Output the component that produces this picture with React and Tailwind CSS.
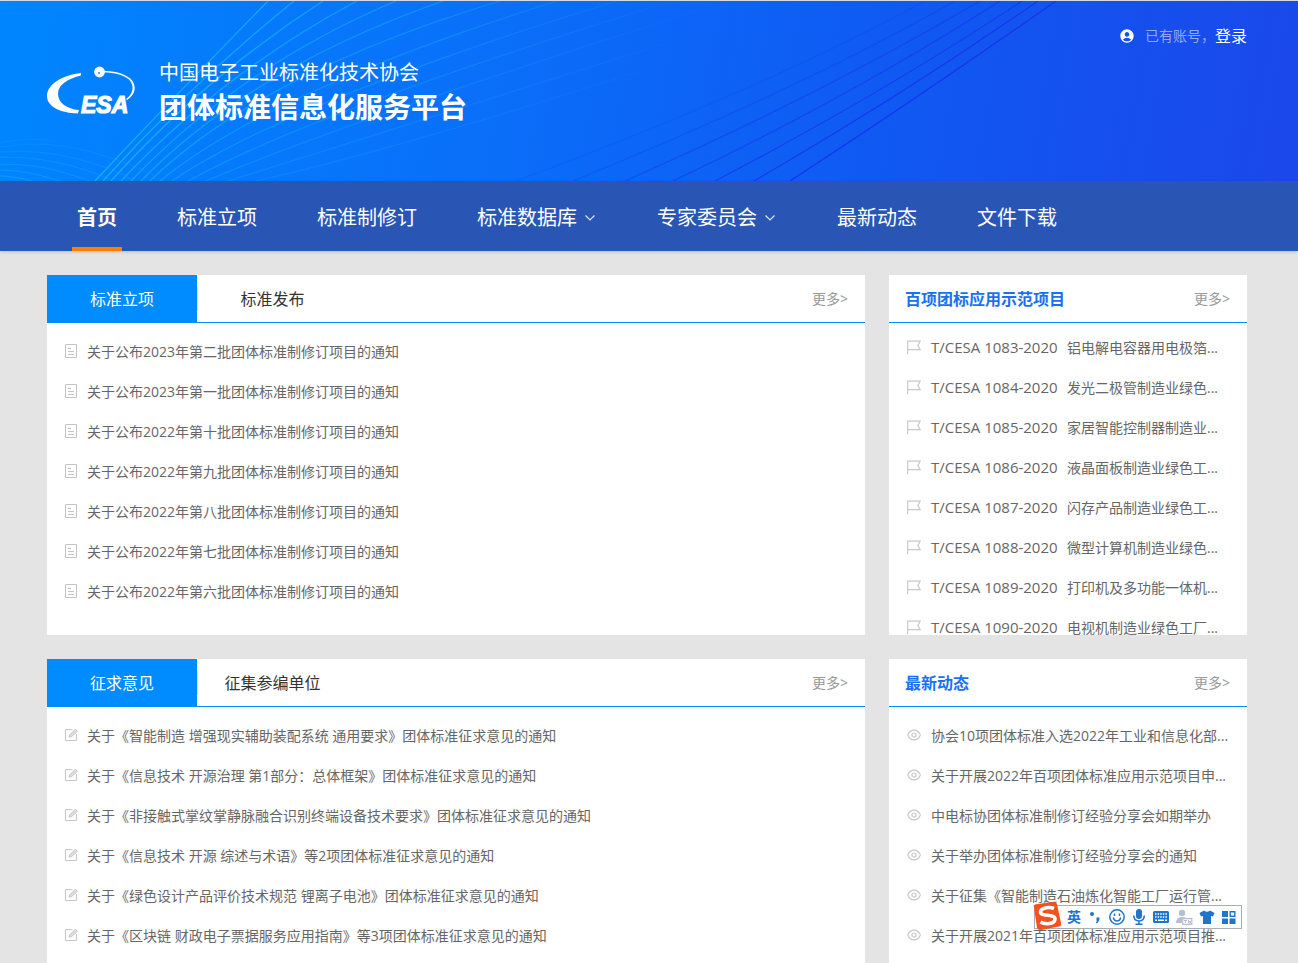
import React from "react";
import { MdAccountCircle } from "react-icons/md";

const NAV = [
  { label: "首页", active: true },
  { label: "标准立项" },
  { label: "标准制修订" },
  { label: "标准数据库", menu: true },
  { label: "专家委员会", menu: true },
  { label: "最新动态" },
  { label: "文件下载" },
];

const NOTICES = [
  "关于公布2023年第二批团体标准制修订项目的通知",
  "关于公布2023年第一批团体标准制修订项目的通知",
  "关于公布2022年第十批团体标准制修订项目的通知",
  "关于公布2022年第九批团体标准制修订项目的通知",
  "关于公布2022年第八批团体标准制修订项目的通知",
  "关于公布2022年第七批团体标准制修订项目的通知",
  "关于公布2022年第六批团体标准制修订项目的通知",
];

const PROJECTS = [
  ["T/CESA 1083-2020", "铝电解电容器用电极箔..."],
  ["T/CESA 1084-2020", "发光二极管制造业绿色..."],
  ["T/CESA 1085-2020", "家居智能控制器制造业..."],
  ["T/CESA 1086-2020", "液晶面板制造业绿色工..."],
  ["T/CESA 1087-2020", "闪存产品制造业绿色工..."],
  ["T/CESA 1088-2020", "微型计算机制造业绿色..."],
  ["T/CESA 1089-2020", "打印机及多功能一体机..."],
  ["T/CESA 1090-2020", "电视机制造业绿色工厂..."],
];

const COMMENTS = [
  "关于《智能制造 增强现实辅助装配系统 通用要求》团体标准征求意见的通知",
  "关于《信息技术 开源治理 第1部分：总体框架》团体标准征求意见的通知",
  "关于《非接触式掌纹掌静脉融合识别终端设备技术要求》团体标准征求意见的通知",
  "关于《信息技术 开源 综述与术语》等2项团体标准征求意见的通知",
  "关于《绿色设计产品评价技术规范 锂离子电池》团体标准征求意见的通知",
  "关于《区块链 财政电子票据服务应用指南》等3项团体标准征求意见的通知",
];

const NEWS = [
  "协会10项团体标准入选2022年工业和信息化部...",
  "关于开展2022年百项团体标准应用示范项目申...",
  "中电标协团体标准制修订经验分享会如期举办",
  "关于举办团体标准制修订经验分享会的通知",
  "关于征集《智能制造石油炼化智能工厂运行管...",
  "关于开展2021年百项团体标准应用示范项目推...",
];

const CYAN_WAVES = [
  "M95 180Q172 98 268 0",
  "M103 180Q190 84 294 0",
  "M111 180Q205 76 323 0",
  "M121 180Q225 70 357 0",
  "M131 180Q240 66 396 0",
  "M141 180Q250 68 443 0",
  "M150 180Q262 72 500 0",
  "M160 180Q270 90 557 0",
  "M172 180Q290 100 617 0",
  "M188 180Q310 112 672 0",
  "M206 180Q340 122 728 0",
  "M228 180Q370 136 800 0",
  "M256 180Q390 150 640 70",
];

const DARK_WAVES = [
  "M790 180Q925 92 1056 0",
  "M754 180Q900 96 1038 0",
  "M715 180Q880 94 1022 0",
  "M673 180Q850 96 1000 0",
  "M625 180Q820 94 980 0",
  "M573 180Q800 88 955 0",
  "M516 180Q760 90 925 0",
];

const LEFT_WAVES = [
  "M0 142Q26 136 54 140",
  "M0 146Q46 138 92 151T164 180",
  "M0 151Q40 148 78 158T134 180",
  "M0 156Q40 156 72 165T112 180",
  "M0 163Q36 163 62 171T90 180",
  "M0 169Q26 169 60 180",
  "M0 175Q14 175 32 180",
];

function HeaderWaves() {
  return (
    <svg
      className="absolute inset-0 h-full w-full"
      viewBox="0 0 1298 180"
      preserveAspectRatio="none"
      fill="none"
      aria-hidden="true"
    >
      <defs>
        <linearGradient id="cyan" gradientUnits="userSpaceOnUse" x1="90" y1="0" x2="740" y2="0">
          <stop offset="0" stopColor="#10c8f4" stopOpacity="0.8" />
          <stop offset="0.55" stopColor="#1ab0fa" stopOpacity="0.65" />
          <stop offset="1" stopColor="#2a90fa" stopOpacity="0" />
        </linearGradient>
      </defs>
      {CYAN_WAVES.map((d, i) => (
        <path key={d} d={d} stroke="url(#cyan)" strokeWidth="1.200" strokeOpacity={1 - i * 0.06} />
      ))}
      {DARK_WAVES.map((d, i) => (
        <path key={d} d={d} stroke="#1c28ec" strokeWidth="1.200" strokeOpacity={0.8 - i * 0.11} />
      ))}
      {LEFT_WAVES.map((d, i) => (
        <path key={d} d={d} stroke="#18b4fa" strokeOpacity={0.15 + i * 0.06} />
      ))}
    </svg>
  );
}

function Logo() {
  return (
    <svg className="h-[50px] w-[90px] shrink-0" viewBox="0 0 90 50" fill="none" role="img" aria-label="CESA">
      <path d="M34 7C16 9 0 18 0 30C0 41 14 47 31 47.500L32 44C20 43 11 37 11 27.500C11 19 21 12.500 34 9.500Z" fill="#fff" />
      <path d="M57 5.500C72 6 87 11 87 22C87 26 84.500 30 79.500 33.500" stroke="#fff" strokeWidth="1.500" />
      <path d="M82 13.500C90 20 88.500 29 79.500 34C86 27 88 20 82 13.500Z" fill="#fff" />
      <circle cx="52.500" cy="6" r="5.400" fill="#fff" />
      <circle cx="52" cy="7" r="0.900" fill="#0a7cff" />
      <text
        x="34"
        y="47"
        fill="#fff"
        stroke="#fff"
        strokeWidth="1.200"
        fontSize="23"
        fontWeight="700"
        fontStyle="italic"
        fontFamily="'Liberation Sans Narrow', 'Liberation Sans', sans-serif"
      >
        ESA
      </text>
    </svg>
  );
}

function ChevronIcon() {
  return (
    <svg className="h-2.5 w-2.5" viewBox="0 0 10 10" fill="none" stroke="#dbe5f8" strokeWidth="1.200" aria-hidden="true">
      <path d="M0.500 2.500L5 7L9.500 2.500" />
    </svg>
  );
}

function DocIcon() {
  return (
    <svg className="mb-0.5 h-3.5 w-3.5 shrink-0" viewBox="0 0 14 14" fill="none" stroke="#c4c4c4" aria-hidden="true">
      <path d="M1.500 0.500H12.500V13.500H1.500ZM4 4.500H7M4 7.500H10M4 10.500H10" />
    </svg>
  );
}

function FlagIcon() {
  return (
    <svg className="mb-0.5 h-3.5 w-3.5 shrink-0" viewBox="0 0 14 14" fill="none" stroke="#c8c8c8" strokeWidth="1.200" aria-hidden="true">
      <path d="M0.700 14V1.200H13.200L10.800 5.300L13.200 9.700H0.700" />
    </svg>
  );
}

function EditIcon() {
  return (
    <svg className="mb-0.5 h-3.5 w-3.5 shrink-0" viewBox="0 0 14 14" fill="none" stroke="#c8c8c8" aria-hidden="true">
      <path d="M8.500 1.500H1.500V12.500H12.500V6" />
      <path d="M5.300 9.200L5.900 6.600L11.300 1.200L13.300 3.200L7.900 8.600Z" fill="#dcdcdc" />
    </svg>
  );
}

function EyeIcon() {
  return (
    <svg className="mb-0.5 h-3.5 w-3.5 shrink-0" viewBox="0 0 14 14" fill="none" stroke="#c8c8c8" strokeWidth="1.200" aria-hidden="true">
      <path d="M0.600 7C2 3.800 4.300 2.100 7 2.100S12 3.800 13.400 7C12 10.200 9.700 11.900 7 11.900S2 10.200 0.600 7Z" />
      <circle cx="7" cy="7" r="2" />
    </svg>
  );
}

function MoreLink() {
  return (
    <a href="#more" className="ml-auto pr-[17px] text-sm text-[#999]">
      更多&gt;
    </a>
  );
}

function TabbedCard({ tabs, items, icon }) {
  return (
    <section className="min-w-0 flex-[818] bg-white">
      <div className="flex h-12 items-center border-b border-[#008cff]">
        <button type="button" className="h-12 w-[150px] bg-[#008cff] text-base text-white">
          {tabs[0]}
        </button>
        <button type="button" className="h-6 w-[150px] border-l border-[#dcdcdc] text-base text-[#333]">
          {tabs[1]}
        </button>
        <MoreLink />
      </div>
      <ul className="pt-[9px]">
        {items.map((t) => (
          <li key={t}>
            <a href="#detail" className="flex h-10 items-center gap-[9px] pr-4 pl-[17px]">
              {icon}
              <span className="text-sm text-[#666]">{t}</span>
            </a>
          </li>
        ))}
      </ul>
    </section>
  );
}

function SideCard({ title, children }) {
  return (
    <section className="min-w-0 flex-[358] overflow-hidden bg-white">
      <div className="flex h-12 items-center border-b border-[#008cff] pl-4">
        <h2 className="text-base font-bold text-[#1a70f5]">{title}</h2>
        <MoreLink />
      </div>
      {children}
    </section>
  );
}

function SideLink({ icon, children }) {
  return (
    <li>
      <a href="#detail" className="flex h-10 items-center gap-2.5 pl-[18px] text-sm whitespace-nowrap text-[#666]">
        {icon}
        {children}
      </a>
    </li>
  );
}

function ImeBar() {
  return (
    <div className="fixed right-14 bottom-[34px] flex h-6 items-center gap-[6px] border border-[#a9adb8] bg-white pr-1 pl-8">
      <svg className="absolute -top-[5px] -left-1 h-8 w-8" viewBox="0 0 32 32" fill="none" aria-hidden="true">
        <path d="M3 6Q2 4 5 3.300L22 1Q25 0.500 26 3L30 22Q30.500 25 28 25.600L10 29Q7 29.500 6 27Z" fill="#f4511e" />
        <path d="M23 7.500C18 5.500 9 7 9.500 11.500C10 16 24 12.500 24 18C24 23 14 24 9.500 21" stroke="#fff" strokeWidth="3.600" />
      </svg>
      <span className="text-sm font-bold text-[#1f74cc]">英</span>
      <svg className="h-4 w-4" viewBox="0 0 16 16" aria-hidden="true">
        <circle cx="5" cy="5" r="2" fill="#1f74cc" />
        <path d="M9.500 8.500H12.500Q13 12 9.500 14.500L8.800 13.500Q10.500 12.200 9.500 11Z" fill="#1f74cc" />
      </svg>
      <svg className="h-4 w-4" viewBox="0 0 16 16" fill="none" stroke="#1f74cc" strokeWidth="1.500" aria-hidden="true">
        <circle cx="8" cy="8" r="7.200" />
        <path d="M4.300 8.500Q5 12 8 12T11.700 8.500M5.500 4.500V7M10.500 4.500V7" />
      </svg>
      <svg className="h-4 w-4" viewBox="0 0 16 16" fill="none" aria-hidden="true">
        <rect x="5" y="0" width="6" height="10" rx="3" fill="#1f74cc" />
        <path d="M2.700 6.500Q3 12 8 12T13.300 6.500M8 12V15M4.500 15.200H11.500" stroke="#1f74cc" strokeWidth="1.600" />
      </svg>
      <svg className="h-4 w-4" viewBox="0 0 16 16" aria-hidden="true">
        <rect x="0" y="2" width="16" height="12" rx="1.500" fill="#1f74cc" />
        <path d="M2 5H14M2 8H14" stroke="#fff" strokeWidth="1.500" strokeDasharray="1.500 1.100" />
        <path d="M2 11.300H4M5 11.300H11M12 11.300H14" stroke="#fff" strokeWidth="1.500" />
      </svg>
      <svg className="h-4 w-[18px]" viewBox="0 0 18 16" aria-hidden="true">
        <circle cx="7" cy="4" r="3.200" fill="#b4bfd6" />
        <path d="M1 14Q1 8 7 8Q10 8 11 9H7V14Z" fill="#b4bfd6" />
        <path d="M7.700 9.700H16.800V15.300H7.700Z" fill="#fff" stroke="#b4bfd6" strokeWidth="1.200" />
        <path d="M9 11.500H12M10.500 11.500V14M13.500 11V14H15.500V12.500H13.500" stroke="#b4bfd6" fill="none" />
      </svg>
      <svg className="h-4 w-4" viewBox="0 0 16 16" aria-hidden="true">
        <path d="M5 1.500Q8 4 11 1.500L15.500 4L14 7.500L12 7V15H4V7L2 7.500L0.500 4Z" fill="#1f74cc" />
      </svg>
      <svg className="h-4 w-4" viewBox="0 0 16 16" aria-hidden="true">
        <path d="M1 2H7V8H1ZM1 9.500H7V15H1ZM8.500 9.500H14.500V15H8.500Z" fill="#1f74cc" />
        <path d="M9.200 2.700H13.800V7.300H9.200Z" fill="none" stroke="#1f74cc" strokeWidth="1.400" />
      </svg>
    </div>
  );
}

export default function App() {
  return (
    <div className="min-h-screen bg-[#e4e4e4] font-['Open_Sans','Noto_Sans_CJK_SC',sans-serif]">
      <header className="relative h-[181px] border-t border-[#d3dae3] bg-[linear-gradient(100deg,#0086ff_0%,#0a6ff9_38%,#1059f3_68%,#1b47eb_100%)]">
        <HeaderWaves />
        <div className="relative pr-1">
          <div className="mx-auto flex max-w-[1200px] items-start justify-between">
            <div className="flex items-center gap-[22px] pt-14">
              <Logo />
              <div className="text-white">
                <p className="text-xl leading-8">中国电子工业标准化技术协会</p>
                <h1 className="text-[28px] leading-9 font-bold">团体标准信息化服务平台</h1>
              </div>
            </div>
            <div className="flex items-center pt-[23px]">
              <MdAccountCircle className="mr-2.5 h-4 w-4 text-white" aria-hidden="true" />
              <span className="text-sm text-[#8fabf8]">已有账号，</span>
              <a href="#login" className="text-base text-white">
                登录
              </a>
            </div>
          </div>
        </div>
      </header>

      <nav className="relative bg-[#2956b5] pr-1 shadow-[0_1px_3px_rgba(0,0,0,0.18)]">
        <ul className="mx-auto flex h-[70px] max-w-[1200px]">
          {NAV.map((n) => (
            <li key={n.label}>
              <a
                href="#nav"
                className="relative flex h-full items-center gap-2 px-[30px] pt-[3px] text-xl whitespace-nowrap text-white"
              >
                <span className={n.active ? "font-bold" : ""}>{n.label}</span>
                {n.menu && (
                  <span className="w-3">
                    <ChevronIcon />
                  </span>
                )}
                {n.active && <span className="absolute inset-x-[25px] bottom-0 h-1 bg-[#ff8000]" />}
              </a>
            </li>
          ))}
        </ul>
      </nav>

      <main className="pt-6 pr-1">
        <div className="mx-auto flex max-w-[1200px] flex-col gap-6">
          <div className="flex h-[360px] gap-6">
            <TabbedCard tabs={["标准立项", "标准发布"]} items={NOTICES} icon={<DocIcon />} />
            <SideCard title="百项团标应用示范项目">
              <ul className="pt-[5px]">
                {PROJECTS.map(([code, name]) => (
                  <SideLink key={code} icon={<FlagIcon />}>
                    <span className="w-[126px] shrink-0 text-[15px]">{code}</span>
                    <span>{name}</span>
                  </SideLink>
                ))}
              </ul>
            </SideCard>
          </div>
          <div className="flex min-h-[360px] gap-6">
            <TabbedCard tabs={["征求意见", "征集参编单位"]} items={COMMENTS} icon={<EditIcon />} />
            <SideCard title="最新动态">
              <ul className="pt-[9px]">
                {NEWS.map((t) => (
                  <SideLink key={t} icon={<EyeIcon />}>
                    <span>{t}</span>
                  </SideLink>
                ))}
              </ul>
            </SideCard>
          </div>
        </div>
      </main>

      <ImeBar />
    </div>
  );
}
